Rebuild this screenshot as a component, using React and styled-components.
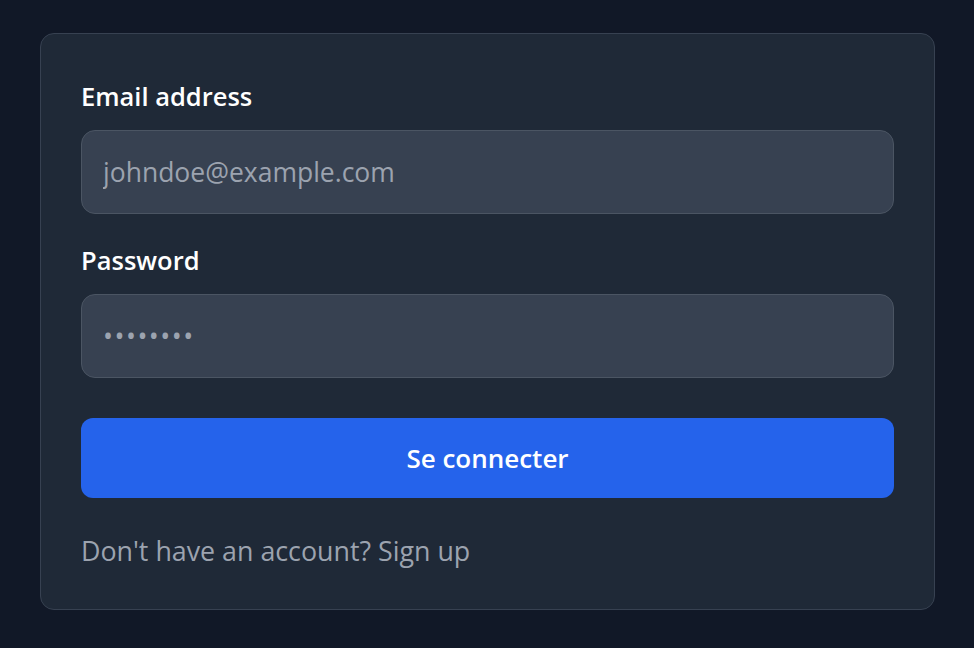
import styled, { createGlobalStyle } from "styled-components";

const Global = createGlobalStyle`
  html, body {
    margin: 0;
    background: #111827;
    font-family: "Open Sans", "Noto Sans", "Liberation Sans", sans-serif;
  }
`;

const Page = styled.div`
  min-height: 648px;
  padding: 33px 39px 0 40px;
  box-sizing: border-box;
`;

const Card = styled.form`
  background: #1f2937;
  border: 1px solid #374151;
  border-radius: 14px;
  padding: 46px 40px 42px 40px;
  display: flex;
  flex-direction: column;
`;

const Label = styled.label`
  color: #ffffff;
  font-size: 25.5px;
  font-weight: 600;
  line-height: 32px;
  margin-bottom: 18px;
`;

const Input = styled.input`
  height: 84px;
  box-sizing: border-box;
  background: #374151;
  border: 1px solid #4b5563;
  border-radius: 14px;
  padding: 0 21px;
  font-family: inherit;
  font-size: 26.5px;
  letter-spacing: ${(p) => p.$spacing || 0}px;
  color: #e5e7eb;
  margin-bottom: ${(p) => p.$gap || 0}px;
  outline: none;
  &::placeholder {
    color: #9ca3af;
  }
`;

const Button = styled.button`
  height: 80px;
  border: none;
  border-radius: 12px;
  background: #2563eb;
  color: #ffffff;
  font-family: inherit;
  font-size: 26px;
  font-weight: 600;
  cursor: pointer;
  margin-bottom: 37px;
`;

const Footer = styled.p`
  margin: 0;
  color: #9ca3af;
  font-size: 26.8px;
  line-height: 32px;
`;

export default function App() {
  return (
    <Page>
      <Global />
      <Card onSubmit={(e) => e.preventDefault()}>
        <Label htmlFor="email">Email address</Label>
        <Input id="email" type="email" placeholder="johndoe@example.com" $gap={30} />
        <Label htmlFor="password">Password</Label>
        <Input id="password" type="password" placeholder="••••••••" $gap={40} $spacing={1.5} />
        <Button type="submit">Se connecter</Button>
        <Footer>Don't have an account? Sign up</Footer>
      </Card>
    </Page>
  );
}
